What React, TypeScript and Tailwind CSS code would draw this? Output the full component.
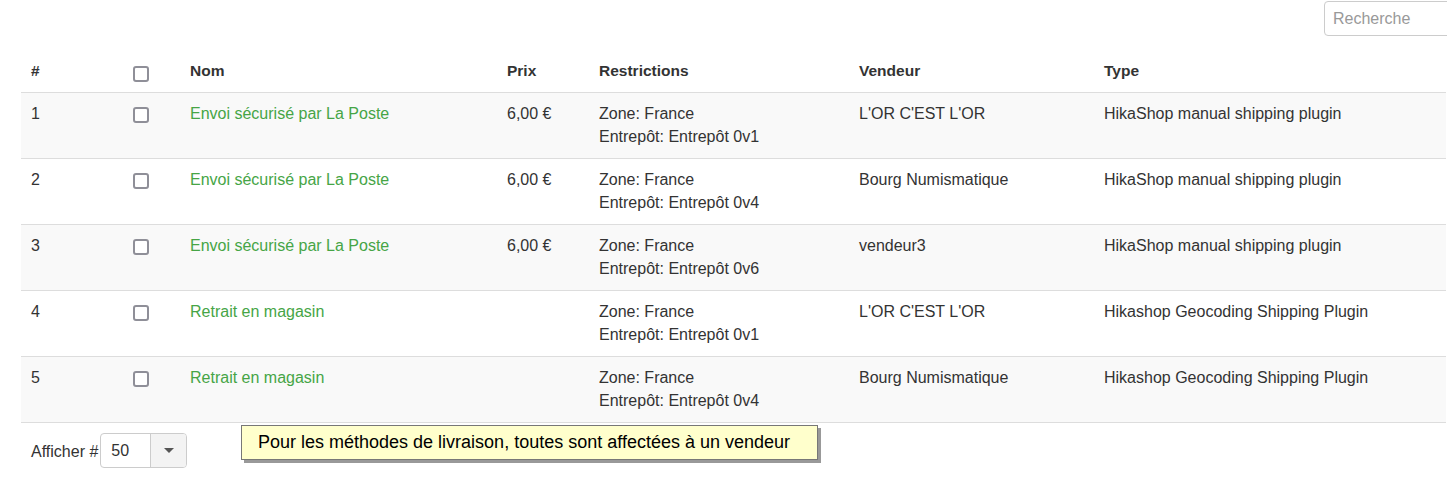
const rows = [
  { id: 1, nom: "Envoi sécurisé par La Poste", prix: "6,00 €", entrepot: "Entrepôt 0v1", vendeur: "L'OR C'EST L'OR", type: "HikaShop manual shipping plugin" },
  { id: 2, nom: "Envoi sécurisé par La Poste", prix: "6,00 €", entrepot: "Entrepôt 0v4", vendeur: "Bourg Numismatique", type: "HikaShop manual shipping plugin" },
  { id: 3, nom: "Envoi sécurisé par La Poste", prix: "6,00 €", entrepot: "Entrepôt 0v6", vendeur: "vendeur3", type: "HikaShop manual shipping plugin" },
  { id: 4, nom: "Retrait en magasin", prix: "", entrepot: "Entrepôt 0v1", vendeur: "L'OR C'EST L'OR", type: "Hikashop Geocoding Shipping Plugin" },
  { id: 5, nom: "Retrait en magasin", prix: "", entrepot: "Entrepôt 0v4", vendeur: "Bourg Numismatique", type: "Hikashop Geocoding Shipping Plugin" },
];

const cols = "grid grid-cols-[102px_57px_317px_92px_260px_245px_1fr]";

function Box() {
  return <div className="mt-[4px] w-[16px] h-[16px] rounded-[3px] border-2 border-[#8f8f98] bg-white" />;
}

export default function App() {
  return (
    <div className="relative w-[1447px] h-[503px] overflow-hidden bg-white text-[#333] text-[16px] font-['Liberation_Sans',Arial,sans-serif]">
      <div className="flex pt-[1px] pl-[1324px]">
        <div className="w-[150px] h-[35px] shrink-0 rounded-[4px] border border-[#ccc] px-[8px] flex items-center text-[16px] text-[#999]">
          Recherche
        </div>
      </div>

      <div className="mt-[19px] ml-[21px] w-[1425px]">
        <div className={`${cols} border-b border-[#ddd] font-bold text-[15.5px] leading-[23px]`}>
          <div className="px-[10px] pt-[4px] pb-[10px]">#</div>
          <div className="px-[10px] pt-[7px] pb-[7px]"><Box /></div>
          <div className="px-[10px] pt-[4px] pb-[10px]">Nom</div>
          <div className="px-[10px] pt-[4px] pb-[10px]">Prix</div>
          <div className="px-[10px] pt-[4px] pb-[10px]">Restrictions</div>
          <div className="px-[10px] pt-[4px] pb-[10px]">Vendeur</div>
          <div className="px-[10px] pt-[4px] pb-[10px]">Type</div>
        </div>
        {rows.map((r, i) => (
          <div key={r.id} className={`${cols} border-b border-[#ddd] leading-[23px] h-[66px] ${i % 2 === 0 ? "bg-[#f9f9f9]" : "bg-white"}`}>
            <div className="px-[10px] pt-[9px]">{r.id}</div>
            <div className="px-[10px] pt-[10px]"><Box /></div>
            <div className="px-[10px] pt-[9px] text-[#46a546]">{r.nom}</div>
            <div className="px-[10px] pt-[9px]">{r.prix}</div>
            <div className="px-[10px] pt-[9px]">
              <div>Zone: France</div>
              <div>Entrepôt: {r.entrepot}</div>
            </div>
            <div className="px-[10px] pt-[9px]">{r.vendeur}</div>
            <div className="px-[10px] pt-[9px]">{r.type}</div>
          </div>
        ))}

        <div className="flex items-center pl-[10px] mt-[10px]">
          <span className="mt-[3px] mr-[2px]">Afficher #</span>
          <div className="flex h-[35px] w-[87px] rounded-[4px] border border-[#ccc] overflow-hidden">
            <div className="flex-1 px-[10px] flex items-center">50</div>
            <div className="w-[36px] border-l border-[#ccc] bg-[#f3f3f3] flex items-center justify-center">
              <svg width="10" height="6" viewBox="0 0 10 6"><path d="M0 0h10L5 5z" fill="#555" /></svg>
            </div>
          </div>
        </div>
      </div>

      <div className="absolute left-[241px] top-[425px] w-[577px] h-[35px] border border-[#777] bg-[#ffffcc] shadow-[3px_3px_0_#999] px-[16px] flex items-center text-[18px] text-black">
        Pour les méthodes de livraison, toutes sont affectées à un vendeur
      </div>
    </div>
  );
}
